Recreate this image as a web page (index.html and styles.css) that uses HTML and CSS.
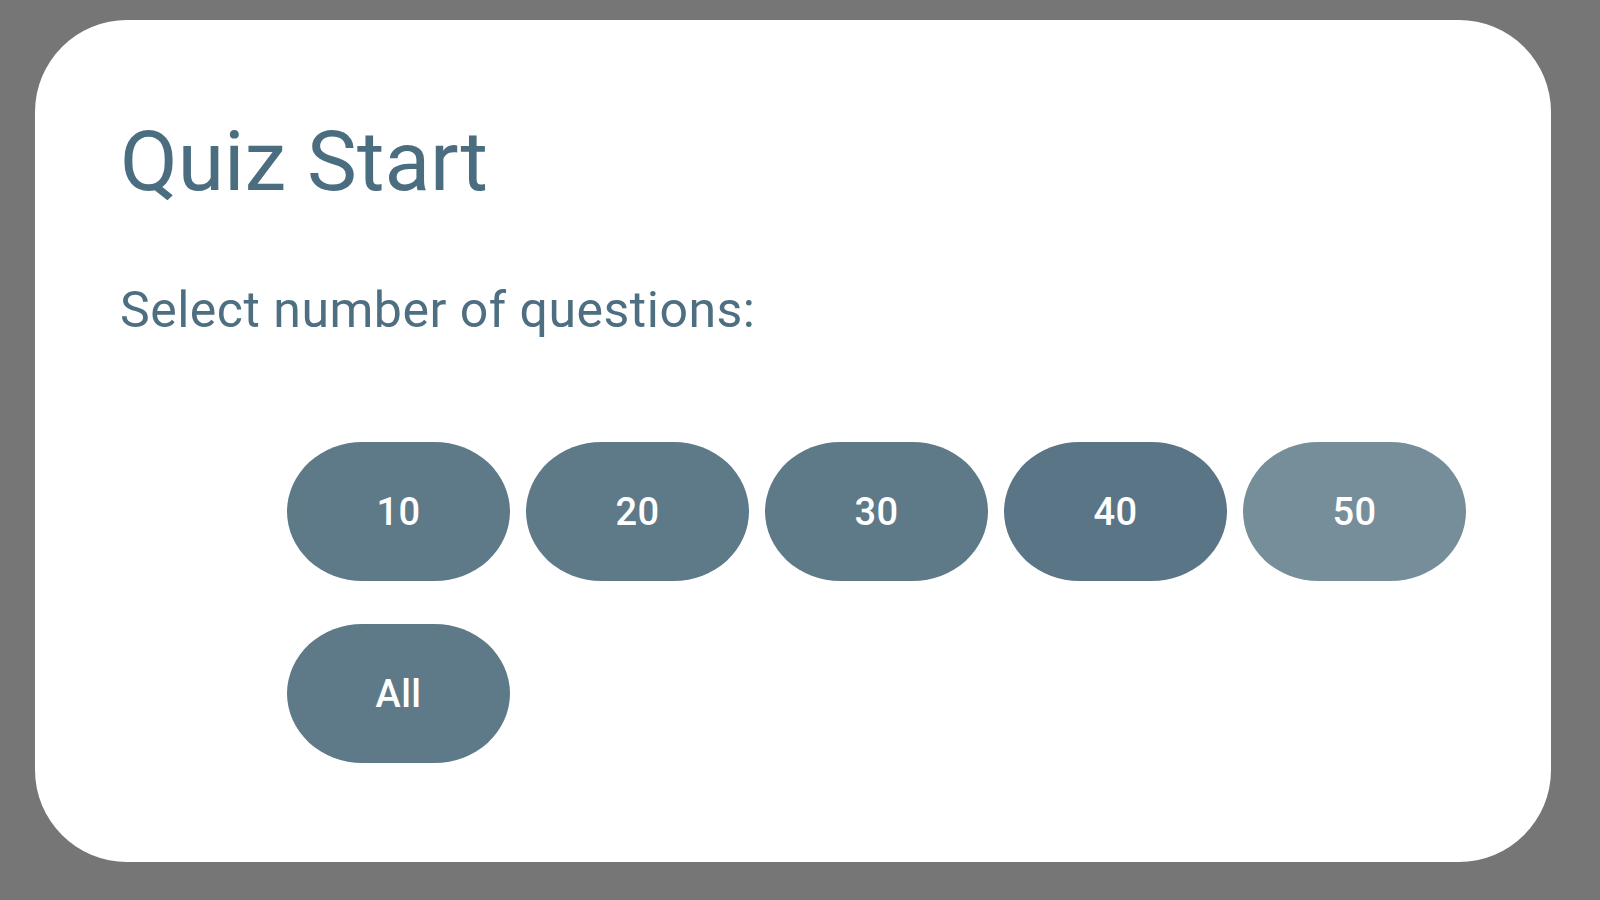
FILE: index.html
```html
<!DOCTYPE html>
<html lang="en">
<head>
<meta charset="utf-8">
<title>Quiz Start</title>
<link rel="stylesheet" href="styles.css">
</head>
<body>
<div class="card">
  <h1 class="title">Quiz Start</h1>
  <p class="subtitle">Select number of questions:</p>
  <div class="options">
    <button class="opt">10</button>
    <button class="opt">20</button>
    <button class="opt">30</button>
    <button class="opt opt-dark">40</button>
    <button class="opt opt-light">50</button>
    <button class="opt">All</button>
  </div>
</div>
</body>
</html>
```

FILE: styles.css
```css
html, body {
  margin: 0;
  padding: 0;
  background: #767676;
  height: 100%;
}
body {
  padding: 20px 0 0 35px;
  box-sizing: border-box;
  font-family: Roboto, "Liberation Sans", sans-serif;
}
.card {
  width: 1516px;
  box-sizing: border-box;
  background: #ffffff;
  border-radius: 92px;
  padding: 100px 85px 99px 85px;
}
.title {
  margin: 0;
  font-size: 84px;
  line-height: 84px;
  font-weight: 400;
  color: #4b6d80;
}
.subtitle {
  margin: 81px 0 0 0;
  font-size: 50px;
  line-height: 50px;
  font-weight: 400;
  color: #4e6f81;
  letter-spacing: 0.5px;
}
.options {
  margin-top: 107px;
  display: grid;
  grid-template-columns: repeat(5, 223px);
  column-gap: 16px;
  row-gap: 43px;
  justify-content: end;
}
.opt {
  height: 139px;
  border: none;
  border-radius: 76px / 70px;
  background: #5e7a89;
  color: #ffffff;
  font-family: Roboto, "Liberation Sans", sans-serif;
  font-size: 38px;
  font-weight: 500;
  letter-spacing: 0.5px;
  padding: 0;
}
.opt-dark {
  background: #5a7686;
}
.opt-light {
  background: #768e9a;
}
```
